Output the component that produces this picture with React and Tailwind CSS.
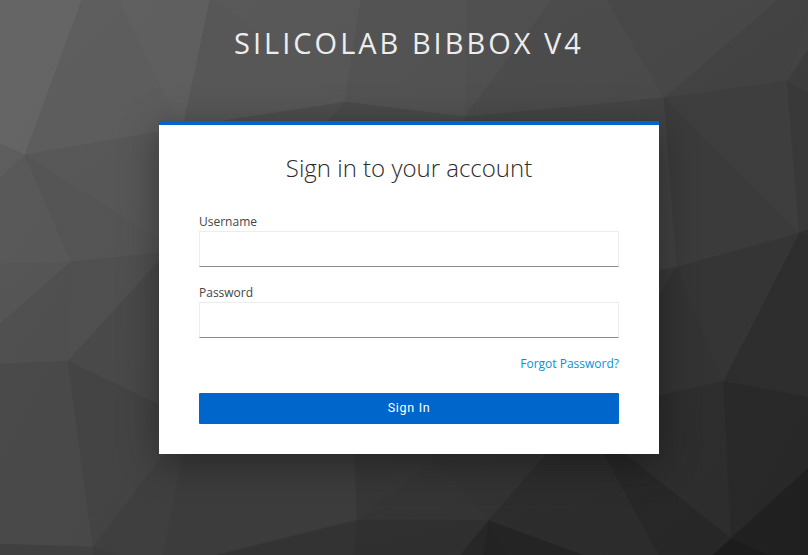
const facets = [
  ['0,0 82,0 25,155 0,144', '#656565', '#646464'],
  ['82,0 119,0 181,128 25,155', '#5e5e5e', '#5c5c5c'],
  ['119,0 210,0 183,128 181,128', '#606060', '#5e5e5e'],
  ['210,0 220,3 345,102 235,119 183,128', '#575757', '#575757'],
  ['210,0 361,0 345,102 220,3', '#595959', '#565656'],
  ['361,0 468,0 465,117 345,102', '#535353', '#525252'],
  ['468,0 552,0 465,117', '#505050', '#4f4f4f'],
  ['552,0 607,0 664,98 465,117', '#4c4c4c', '#4a4a4a'],
  ['607,0 778,0 664,98', '#484848', '#474747'],
  ['778,0 808,0 808,18 787,81 664,98', '#444444', '#414141'],
  ['808,18 808,50 787,81', '#444444', '#434343'],
  ['808,50 808,93 787,81', '#3d3d3d', '#3c3c3c'],
  ['235,119 345,102 322,128 183,128', '#4e4e4e', '#4e4e4e'],
  ['345,102 465,117 460,140 322,128', '#4a4a4a', '#4a4a4a'],
  ['465,117 664,98 670,180 460,140', '#454545', '#444444'],
  ['664,98 677,267 640,274 640,100', '#434343', '#404040'],
  ['664,98 787,81 799,233', '#3e3e3e', '#3e3e3e'],
  ['664,98 799,233 677,267', '#3b3b3b', '#3b3b3b'],
  ['787,81 808,93 808,229 799,233', '#393939', '#383838'],
  ['799,233 808,229 808,236', '#303030', '#303030'],
  ['799,233 808,236 808,397 723,381', '#2d2d2d', '#2e2e2e'],
  ['677,267 799,233 723,381', '#353535', '#353535'],
  ['640,274 677,267 640,325', '#383838', '#383838'],
  ['677,267 723,381 640,400 640,325', '#333333', '#333333'],
  ['723,381 731,538 600,434 640,400', '#2e2e2e', '#2d2d2d'],
  ['723,381 808,397 808,468 731,538', '#292929', '#282828'],
  ['808,468 808,555 770,555 731,538', '#212121', '#202020'],
  ['731,538 770,555 712,555', '#1c1c1c', '#1c1c1c'],
  ['590,430 600,434 731,538 712,555 658,555', '#282828', '#272727'],
  ['0,144 25,155 0,179', '#5e5e5e', '#5d5d5d'],
  ['0,179 25,155 71,262 0,264', '#595959', '#585858'],
  ['25,155 181,128 190,260', '#585858', '#565656'],
  ['25,155 190,260 190,250 71,262', '#555555', '#545454'],
  ['0,264 71,262 0,324', '#565656', '#545454'],
  ['71,262 68,361 0,364 0,324', '#505050', '#4f4f4f'],
  ['71,262 190,250 159,261 68,361', '#505050', '#4f4f4f'],
  ['159,261 190,250 190,420 68,361', '#4a4a4a', '#484848'],
  ['0,364 68,361 93,547 0,544', '#4a4a4a', '#484848'],
  ['68,361 190,420 93,547', '#444444', '#434343'],
  ['0,544 93,547 93,555 0,555', '#404040', '#404040'],
  ['93,547 190,420 182,457 163,555 108,555', '#3f3f3f', '#3f3f3f'],
  ['93,547 118,555 93,555', '#3c3c3c', '#3c3c3c'],
  ['190,420 354,440 357,520 217,555 163,555 182,457', '#3c3c3c', '#3c3c3c'],
  ['217,555 357,520 354,555', '#333333', '#333333'],
  ['354,440 432,440 432,462 357,520', '#373737', '#363636'],
  ['357,520 432,462 489,520', '#353535', '#343434'],
  ['432,462 432,440 560,440 489,520', '#343434', '#323232'],
  ['357,520 489,520 460,555 354,555', '#303030', '#2f2f2f'],
  ['489,520 483,555 460,555', '#272727', '#272727'],
  ['489,520 508,555 483,555', '#232323', '#232323'],
  ['489,520 585,555 508,555', '#242424', '#242424'],
  ['560,438 590,430 658,555 585,555 489,520', '#2d2d2d', '#2c2c2c'],
]

function Backdrop() {
  return (
    <svg className="absolute inset-0 h-full w-full" viewBox="0 0 808 555" preserveAspectRatio="xMidYMid slice" aria-hidden="true">
      <defs>
        {facets.map(([, from, to], i) => (
          <linearGradient key={i} id={`facet-${i}`} x1="0" y1="0" x2="1" y2="1">
            <stop offset="0" stopColor={from} />
            <stop offset="1" stopColor={to} />
          </linearGradient>
        ))}
      </defs>
      <rect width="808" height="555" fill="#404040" />
      {facets.map(([points], i) => (
        <polygon key={i} points={points} fill={`url(#facet-${i})`} stroke={`url(#facet-${i})`} strokeWidth="0.6" />
      ))}
    </svg>
  )
}

function Field({ id, label, type }) {
  return (
    <div className="mb-[15px] flex flex-col">
      <label htmlFor={id} className="h-5 text-[12px] leading-[22px] text-[#444444]">
        {label}
      </label>
      <input
        id={id}
        type={type}
        className="h-9 w-full border border-[#ededed] border-b-[#8a8d90] bg-white px-2 text-base outline-none"
      />
    </div>
  )
}

export default function App() {
  return (
    <div className="relative h-[555px] w-full overflow-hidden bg-[#404040] font-['Open_Sans',sans-serif]">
      <Backdrop />
      <div className="relative ml-[159px] flex w-[500px] flex-col">
        <header className="h-[121px] pt-[24px] text-center text-[29px] leading-[38px] font-normal tracking-[3px] whitespace-nowrap text-[#ededed] uppercase">
          Silicolab BIBBOX V4
        </header>
        <main className="border-t-4 border-[#0066cc] bg-white px-10 pb-[30px] shadow-[0_8px_36px_rgba(0,0,0,0.36)]">
          <h1 className="pt-[27px] text-center text-[24px] leading-[32px] font-light text-[#2c2c2c]">
            Sign in to your account
          </h1>
          <form className="mt-[27px] flex flex-col">
            <Field id="username" label="Username" type="text" />
            <Field id="password" label="Password" type="password" />
            <a href="#" className="h-5 self-end text-[12px] leading-[22px] text-[#0a90d4]">
              Forgot Password?
            </a>
            <button
              type="button"
              className="mt-5 h-[31px] w-full rounded-[1px] bg-[#0066cc] pb-[2px] font-['Roboto',sans-serif] text-[12.5px] leading-[29px] font-normal tracking-[0.7px] text-white"
            >
              Sign In
            </button>
          </form>
        </main>
      </div>
    </div>
  )
}
